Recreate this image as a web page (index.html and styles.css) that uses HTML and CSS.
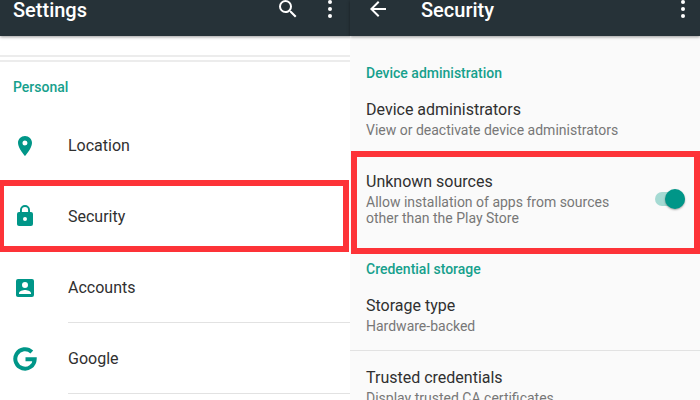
FILE: index.html
```html
<!DOCTYPE html>
<html lang="en">
<head>
<meta charset="utf-8">
<title>Settings</title>
<link rel="stylesheet" href="styles.css">
</head>
<body>
<div class="screens">
  <section class="screen screen-settings">
    <header class="bar">
      <h1 class="bar-title">Settings</h1>
      <button class="bar-button" type="button" aria-label="Search">
        <svg class="bar-icon" viewBox="3 3 18 18"><path d="M15.5 14h-.79l-.28-.27A6.47 6.47 0 0 0 16 9.5 6.5 6.5 0 1 0 9.5 16c1.61 0 3.09-.59 4.23-1.57l.27.28v.79l5 4.99L20.49 19l-4.99-5zm-6 0a4.5 4.5 0 1 1 0-9 4.5 4.5 0 0 1 0 9z"/></svg>
      </button>
      <button class="bar-button more" type="button" aria-label="More options">
        <svg class="bar-icon" viewBox="3 3 18 18"><circle cx="12" cy="5" r="2"/><circle cx="12" cy="12" r="2"/><circle cx="12" cy="19" r="2"/></svg>
      </button>
    </header>
    <div class="card-gap"></div>
    <h2 class="category">Personal</h2>
    <nav class="items">
      <a class="item" href="#location">
        <svg class="item-icon" viewBox="0 0 24 24"><path d="M12 2C8.13 2 5 5.13 5 9c0 5.25 7 13 7 13s7-7.75 7-13c0-3.87-3.13-7-7-7zm0 9.500a2.500 2.500 0 1 1 0-5 2.500 2.500 0 0 1 0 5z"/></svg>
        <span class="item-label">Location</span>
      </a>
      <a class="item highlight" href="#security">
        <svg class="item-icon" viewBox="0 0 24 24"><path d="M18 8h-1V6A5 5 0 0 0 7 6v2H6a2 2 0 0 0-2 2v10c0 1.100.9 2 2 2h12a2 2 0 0 0 2-2V10a2 2 0 0 0-2-2zm-6 9a2 2 0 1 1 0-4 2 2 0 0 1 0 4zm3.100-9H8.900V6a3.100 3.100 0 0 1 6.200 0v2z"/></svg>
        <span class="item-label">Security</span>
      </a>
      <a class="item" href="#accounts">
        <svg class="item-icon" viewBox="0 0 24 24"><path d="M3 5v14c0 1.100.89 2 2 2h14a2 2 0 0 0 2-2V5a2 2 0 0 0-2-2H5a2 2 0 0 0-2 2zm12 4a3 3 0 1 1-6 0 3 3 0 0 1 6 0zm-9 8c0-2 4-3.100 6-3.100s6 1.100 6 3.100v1H6v-1z"/></svg>
        <span class="item-label ruled">Accounts</span>
      </a>
      <a class="item" href="#google">
        <svg class="item-icon" viewBox="0 0 24 24"><path class="ring" d="M18.800 5A9.700 9.700 0 1 0 21.700 12.200H12.500"/></svg>
        <span class="item-label ruled">Google</span>
      </a>
    </nav>
  </section>

  <section class="screen screen-security">
    <header class="bar">
      <button class="bar-button back" type="button" aria-label="Back">
        <svg class="bar-icon" viewBox="3 3 18 18"><path d="M20 11H7.830l5.590-5.590L12 4l-8 8 8 8 1.410-1.410L7.830 13H20v-2z"/></svg>
      </button>
      <h1 class="bar-title">Security</h1>
      <button class="bar-button more" type="button" aria-label="More options">
        <svg class="bar-icon" viewBox="3 3 18 18"><circle cx="12" cy="5" r="2"/><circle cx="12" cy="12" r="2"/><circle cx="12" cy="19" r="2"/></svg>
      </button>
    </header>
    <h2 class="category first">Device administration</h2>
    <div class="pref compact">
      <h3 class="pref-title">Device administrators</h3>
      <p class="pref-note">View or deactivate device administrators</p>
    </div>
    <div class="pref highlight">
      <div class="pref-text">
        <label class="pref-title" for="unknown">Unknown sources</label>
        <p class="pref-note">Allow installation of apps from sources other than the Play Store</p>
      </div>
      <input class="switch" id="unknown" type="checkbox" role="switch" checked>
    </div>
    <h2 class="category">Credential storage</h2>
    <div class="pref ruled">
      <h3 class="pref-title">Storage type</h3>
      <p class="pref-note">Hardware-backed</p>
    </div>
    <div class="pref">
      <h3 class="pref-title">Trusted credentials</h3>
      <p class="pref-note">Display trusted CA certificates</p>
    </div>
  </section>
</div>
</body>
</html>
```
FILE: styles.css
```css
* {
  box-sizing: border-box;
}

body {
  margin: 0;
  font-family: Roboto, "Liberation Sans", sans-serif;
  color: #303030;
  background: #fff;
}

h1, h2, h3, p {
  margin: 0;
}

.screens {
  display: grid;
  grid-template-columns: 1fr 1fr;
  height: 100vh;
  overflow: hidden;
}

.screen-security {
  background: #fafafa;
}

/* App bar */
.bar {
  display: flex;
  align-items: flex-start;
  height: 36px;
  padding-left: 13px;
  background: #263238;
  color: #fff;
  box-shadow: 0 1px 3px rgba(0, 0, 0, 0.4);
}

.bar-title {
  flex: 1;
  font-size: 20px;
  font-weight: 500;
  line-height: 20px;
}

.bar-button {
  display: flex;
  padding: 0;
  border: 0;
  background: none;
  color: inherit;
}

.bar-icon {
  width: 18px;
  height: 18px;
  fill: currentColor;
}

.more {
  margin-left: 24px;
  margin-right: 11px;
}

.screen-security .bar {
  padding-left: 19px;
}

.screen-security .more {
  margin-right: 8px;
}

.back {
  margin-right: 34px;
}

.card-gap {
  height: 7px;
  margin-top: 19px;
  border: solid #ececec;
  border-width: 2px 0;
}

.category {
  color: #16a08c;
  font-size: 14px;
  font-weight: 500;
  line-height: 20px;
}

/* Settings list */
.screen-settings .category {
  padding: 15px 13px 13px;
}

.item {
  display: flex;
  align-items: center;
  height: 71px;
  padding-left: 13px;
  color: inherit;
  text-decoration: none;
}

.item-icon {
  flex: none;
  width: 24px;
  height: 24px;
  margin-right: 31px;
  fill: #009688;
}

.ring {
  fill: none;
  stroke: #009688;
  stroke-width: 4;
}

.item-label {
  display: flex;
  flex: 1;
  align-items: center;
  height: 100%;
  font-size: 16px;
}

.ruled {
  border-bottom: 1px solid #e2e2e2;
}

.highlight {
  border: 6px solid #fd3338;
}

.item.highlight {
  height: 72px;
  margin-top: -1px;
  margin-right: 1px;
  padding-left: 9px;
  border-left-width: 4px;
}

/* Security preferences */
.screen-security .category {
  padding: 5px 16px 0;
}

.screen-security .first {
  padding-top: 27px;
}

.pref {
  padding: 17px 16px 16px;
}

.pref.compact {
  padding-bottom: 13px;
}

.pref-title {
  display: block;
  margin-bottom: 2px;
  font-size: 16px;
  font-weight: 400;
  line-height: 20px;
}

.pref-note {
  color: #777;
  font-size: 14px;
  line-height: 16px;
}

.pref.highlight {
  display: flex;
  align-items: center;
  justify-content: space-between;
  margin-left: 1px;
  padding: 15px 9px 22px;
}

.pref-text {
  max-width: 260px;
}

.switch {
  appearance: none;
  display: flex;
  align-items: center;
  justify-content: flex-end;
  flex: none;
  width: 30px;
  height: 14px;
  margin: 0;
  border-radius: 7px;
  background: #a5dad3;
}

.switch::before {
  content: "";
  width: 20px;
  height: 20px;
  border-radius: 50%;
  background: #009688;
  box-shadow: 0 1px 2px rgba(0, 0, 0, 0.35);
}
```
